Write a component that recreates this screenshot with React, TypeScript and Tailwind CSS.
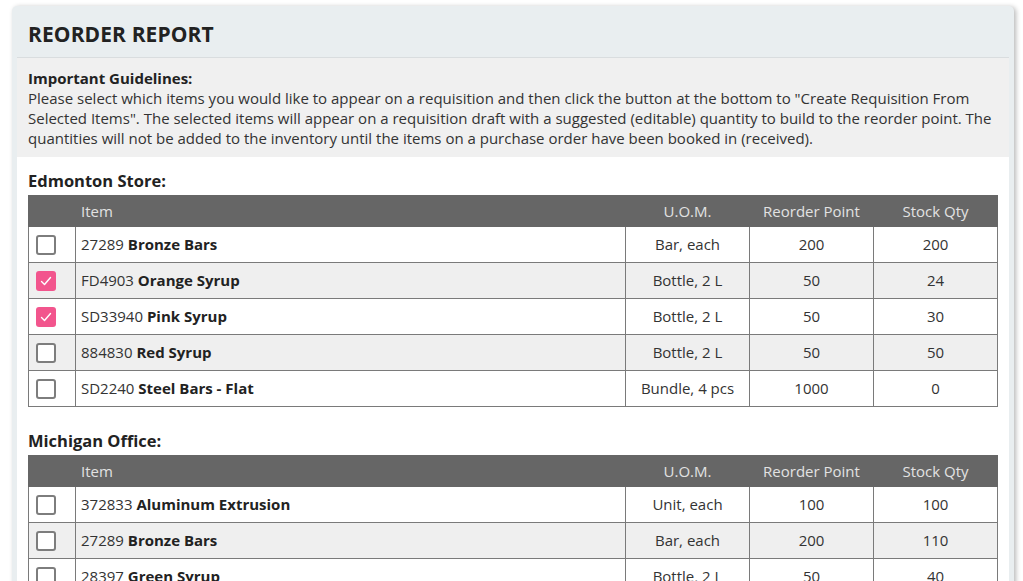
import React from "react";

type Row = { code: string; name: string; uom: string; rp: string; qty: string; checked?: boolean };

const edmonton: Row[] = [
  { code: "27289", name: "Bronze Bars", uom: "Bar, each", rp: "200", qty: "200" },
  { code: "FD4903", name: "Orange Syrup", uom: "Bottle, 2 L", rp: "50", qty: "24", checked: true },
  { code: "SD33940", name: "Pink Syrup", uom: "Bottle, 2 L", rp: "50", qty: "30", checked: true },
  { code: "884830", name: "Red Syrup", uom: "Bottle, 2 L", rp: "50", qty: "50" },
  { code: "SD2240", name: "Steel Bars - Flat", uom: "Bundle, 4 pcs", rp: "1000", qty: "0" },
];

const michigan: Row[] = [
  { code: "372833", name: "Aluminum Extrusion", uom: "Unit, each", rp: "100", qty: "100" },
  { code: "27289", name: "Bronze Bars", uom: "Bar, each", rp: "200", qty: "110" },
  { code: "28397", name: "Green Syrup", uom: "Bottle, 2 L", rp: "50", qty: "40" },
  { code: "884830", name: "Red Syrup", uom: "Bottle, 2 L", rp: "50", qty: "20" },
];

function Checkbox({ checked }: { checked?: boolean }) {
  if (checked) {
    return (
      <div className="w-[20px] h-[20px] rounded-[3px] bg-[#f2558d] flex items-center justify-center">
        <svg width="14" height="14" viewBox="0 0 14 14" fill="none">
          <path d="M2.5 7.5 L5.5 10.5 L11.5 3.5" stroke="white" strokeWidth="1.4" strokeLinecap="round" strokeLinejoin="round" />
        </svg>
      </div>
    );
  }
  return <div className="w-[20px] h-[20px] rounded-[3px] border-2 border-[#7d7d7d] bg-white" />;
}

function StoreTable({ title, rows, first }: { title: string; rows: Row[]; first?: boolean }) {
  return (
    <div className={first ? "pt-[13px]" : "pt-[23px]"}>
      <div className="text-[16.5px] font-bold text-[#222] leading-[22px] mb-[3px]">{title}</div>
      <table className="w-[970px] border-collapse table-fixed text-[15px] text-[#333]">
        <colgroup>
          <col className="w-[47px]" />
          <col />
          <col className="w-[124px]" />
          <col className="w-[124px]" />
          <col className="w-[124px]" />
        </colgroup>
        <thead>
          <tr className="bg-[#666666] text-[#e2e2e2] h-[31px]">
            <th className="font-normal border border-[#666666]" />
            <th className="font-normal text-left pl-[5px] border border-[#666666]">Item</th>
            <th className="font-normal text-center border border-[#666666]">U.O.M.</th>
            <th className="font-normal text-center border border-[#666666]">Reorder Point</th>
            <th className="font-normal text-center border border-[#666666]">Stock Qty</th>
          </tr>
        </thead>
        <tbody>
          {rows.map((r, i) => (
            <tr key={i} className={(i % 2 === 1 ? "bg-[#efefef]" : "bg-white") + " h-[36px]"}>
              <td className="border border-[#7a7a7a] pl-[7px]">
                <Checkbox checked={r.checked} />
              </td>
              <td className="border border-[#7a7a7a] pl-[5px]">
                {r.code} <span className="font-bold text-[#222]">{r.name}</span>
              </td>
              <td className="border border-[#7a7a7a] text-center">{r.uom}</td>
              <td className="border border-[#7a7a7a] text-center">{r.rp}</td>
              <td className="border border-[#7a7a7a] text-center">{r.qty}</td>
            </tr>
          ))}
        </tbody>
      </table>
    </div>
  );
}

export default function App() {
  return (
    <div className="w-[1023px] h-[581px] overflow-hidden bg-white font-['Open_Sans',sans-serif]">
      <div className="pt-[6px] pl-[12px] pr-[9px]">
        <div className="bg-[#e9eef0] rounded-t-[5px] px-[5px] shadow-[2px_1px_5px_rgba(0,0,0,0.28)] min-h-[600px]">
          <div className="h-[52px] flex items-center pl-[11px] border-b border-[#d9dddf]">
            <h1 className="text-[21px] font-bold text-[#222] tracking-[0.1px] pt-[7px]">REORDER REPORT</h1>
          </div>
          <div className="bg-[#f0f0f0] px-[11px] pt-[10px] pb-[9px] text-[15px] leading-[20px] text-[#333]">
            <div className="font-bold text-[#222]">Important Guidelines:</div>
            <p>
              Please select which items you would like to appear on a requisition and then click the button at the bottom to "Create Requisition From Selected Items". The selected items will appear on a requisition draft with a suggested (editable) quantity to build to the reorder point. The quantities will not be added to the inventory until the items on a purchase order have been booked in (received).
            </p>
          </div>
          <div className="bg-white px-[11px] pb-[20px] min-h-[500px]">
            <StoreTable title="Edmonton Store:" rows={edmonton} first />
            <StoreTable title="Michigan Office:" rows={michigan} />
          </div>
        </div>
      </div>
    </div>
  );
}
